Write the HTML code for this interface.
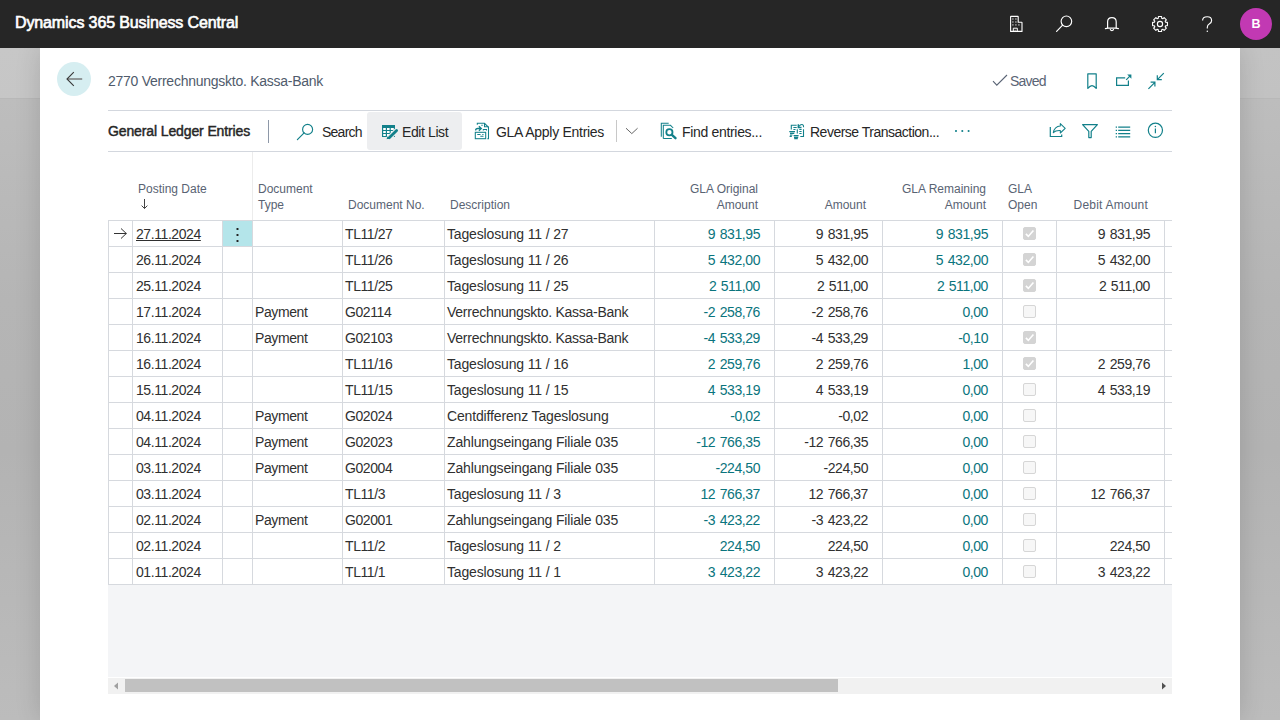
<!DOCTYPE html><html><head><meta charset="utf-8"><style>*{margin:0;padding:0;box-sizing:border-box}
html,body{width:1280px;height:720px;overflow:hidden}
body{position:relative;font-family:"Liberation Sans",sans-serif;background:linear-gradient(180deg,#bdbdbd 99px,#b5b5b5 300px,#b3b3b3 450px,#bcbcbc 720px);color:#212121}
.abs{position:absolute}
#top{position:absolute;left:0;top:0;width:1280px;height:48px;background:#262626}
#brand{position:absolute;left:15px;top:13px;font-size:16px;color:#fff;-webkit-text-stroke:0.65px #fff;letter-spacing:-0.12px;line-height:20px}
#bgtop{position:absolute;left:0;top:48px;width:1280px;height:51px;background:linear-gradient(170deg,#c7c7c7,#c2c2c2);border-bottom:1px solid #b8b8b8}
#panel{position:absolute;left:40px;top:48px;width:1200px;height:672px;background:#fff;box-shadow:0 0 24px rgba(0,0,0,0.14)}
#back{position:absolute;left:57px;top:62px;width:34px;height:34px;border-radius:50%;background:#d6eef1}
#title{position:absolute;left:108px;top:72px;font-size:14px;line-height:18px;color:#505b6c;letter-spacing:-0.26px}
#saved{position:absolute;left:1010px;top:72px;font-size:14px;line-height:18px;color:#5a6475;letter-spacing:-0.8px}
.line{position:absolute;left:108px;width:1064px;height:1px;background:#d3d7de}
#glt{position:absolute;left:108px;top:122px;font-size:14px;line-height:18px;color:#262626;-webkit-text-stroke:0.45px #262626;letter-spacing:-0.12px}
.tb{position:absolute;top:123px;font-size:14px;line-height:18px;color:#262626;letter-spacing:-0.4px}
#editbg{position:absolute;left:367px;top:112px;width:95px;height:38px;background:#edeef0;border-radius:3px}
.vsep{position:absolute;width:1px}
.hdr{position:absolute;font-size:12px;line-height:16px;color:#596373}
.hl{position:absolute;left:108px;width:1064px;height:1px;background:#d6d9de}
.vl{position:absolute;width:1px;background:#d6d9de}
.c{position:absolute;height:26px;line-height:28px;font-size:14px;letter-spacing:-0.42px;word-spacing:1px;color:#303030;white-space:nowrap}
.c.teal{color:#0a747d}
.c.ds{letter-spacing:-0.15px;word-spacing:0}
.c.ty{letter-spacing:-0.4px}
.c.vk{letter-spacing:-0.26px}
.sel{position:absolute;left:223px;width:29px;height:25px;background:#b4e5ea}
.cb{position:absolute;width:13px;height:13px;border:1px solid #d6d6d6;border-radius:2px;background:#f7f7f7}
.cb.on{background:#d4d4d4;border-color:#d4d4d4}
.cb svg{position:absolute;left:-1px;top:-1px}
#empty{position:absolute;left:108px;top:585px;width:1064px;height:92px;background:#f4f5f7}
#sbtrack{position:absolute;left:108px;top:678px;width:1064px;height:16px;background:#f1f1f1}
#sbthumb{position:absolute;left:125px;top:679px;width:713px;height:13px;background:#c1c1c1}
</style></head><body>
<div id="bgtop"></div>
<div id="panel"></div>
<div id="top"></div>
<div id="brand">Dynamics 365 Business Central</div>
<!-- top icons: building -->
<svg class="abs" style="left:1004px;top:12px" width="24" height="24" viewBox="0 0 24 24"><path d="M6.6 19.4V4.8Q6.6 4.4 7 4.4H13.8Q14.2 4.4 14.2 4.8V10.2H17.6Q18 10.2 18 10.6V19.4Z" fill="none" stroke="#fff" stroke-width="1.1" stroke-linejoin="round"/><path d="M9.3 19.4V16.2H13.3V19.4" fill="none" stroke="#fff" stroke-width="1"/><path d="M10.4 18.3H12.2" stroke="#aaa" stroke-width="1"/><g fill="#ddd"><rect x="8.3" y="6.4" width="1.2" height="1.2"/><rect x="11.3" y="6.4" width="1.2" height="1.2"/><rect x="8.3" y="9.4" width="1.2" height="1.2"/><rect x="11.3" y="9.4" width="1.2" height="1.2"/><rect x="8.3" y="12.3" width="1.2" height="1.2"/><rect x="11.3" y="12.3" width="1.2" height="1.2"/><rect x="14.3" y="12.3" width="1.2" height="1.2"/></g></svg>
<!-- search -->
<svg class="abs" style="left:1054px;top:12px" width="24" height="24" viewBox="0 0 24 24"><circle cx="12.4" cy="9.3" r="5.3" fill="none" stroke="#fff" stroke-width="1.15"/><path d="M8.6 13.1L2.6 19.3" stroke="#fff" stroke-width="1.2" stroke-linecap="round"/></svg>
<!-- bell -->
<svg class="abs" style="left:1100px;top:12px" width="24" height="24" viewBox="0 0 24 24"><path d="M7.6 16.2V9.8Q7.6 5.6 11.9 5.6Q16.2 5.6 16.2 9.8V16.2" fill="none" stroke="#fff" stroke-width="1.2"/><path d="M5.4 16.6Q7 16.2 8 16.2H15.8Q16.8 16.2 18.4 16.6" fill="none" stroke="#fff" stroke-width="1.2" stroke-linecap="round"/><path d="M10.2 17Q10.2 18.6 11.9 18.6Q13.6 18.6 13.6 17" fill="none" stroke="#fff" stroke-width="1.1"/></svg>
<!-- gear -->
<svg class="abs" style="left:1148px;top:12px" width="24" height="24" viewBox="0 0 24 24"><g transform="translate(12,12)"><path d="M-1.72 -5.64L-1.58 -7.43L1.58 -7.43L1.72 -5.64L2.77 -5.21L4.14 -6.37L6.37 -4.14L5.21 -2.77L5.64 -1.72L7.43 -1.58L7.43 1.58L5.64 1.72L5.21 2.77L6.37 4.14L4.14 6.37L2.77 5.21L1.72 5.64L1.58 7.43L-1.58 7.43L-1.72 5.64L-2.77 5.21L-4.14 6.37L-6.37 4.14L-5.21 2.77L-5.64 1.72L-7.43 1.58L-7.43 -1.58L-5.64 -1.72L-5.21 -2.77L-6.37 -4.14L-4.14 -6.37L-2.77 -5.21Z" fill="none" stroke="#fff" stroke-width="1.1" stroke-linejoin="round"/><circle r="2.6" fill="none" stroke="#fff" stroke-width="1.15"/></g></svg>
<!-- help -->
<svg class="abs" style="left:1196px;top:12px" width="24" height="24" viewBox="0 0 24 24"><path d="M6.6 8.6Q6.6 4.7 11.3 4.7Q15.6 4.7 15.6 8.4Q15.6 10.4 13.5 11.7Q11.3 13 11.3 15.2V16.6" fill="none" stroke="#fff" stroke-width="1.15"/><circle cx="11.3" cy="19.2" r="0.75" fill="#fff"/></svg>
<div class="abs" style="left:1240px;top:8px;width:32px;height:32px;border-radius:50%;background:#c239b3;color:#fff;font-weight:bold;font-size:12.5px;line-height:32px;text-align:center">B</div>
<!-- panel header -->
<div id="back"></div>
<svg class="abs" style="left:63px;top:67px" width="24" height="24" viewBox="0 0 24 24"><path d="M4.5 12H19.2" stroke="#6a6a6a" stroke-width="1.3"/><path d="M10.8 5.2L4 12L10.8 18.8" fill="none" stroke="#3a3a3a" stroke-width="1.1"/></svg>
<div id="title">2770 Verrechnungskto. Kassa-Bank</div>
<svg class="abs" style="left:990px;top:72px" width="20" height="16" viewBox="0 0 20 16"><path d="M3 9.2L6.8 13.2L17 3" fill="none" stroke="#5a6475" stroke-width="1.1"/></svg>
<div id="saved">Saved</div>
<!-- bookmark -->
<svg class="abs" style="left:1080px;top:68px" width="24" height="24" viewBox="0 0 24 24"><path d="M7.8 20.4V5.8H16.2V20.4Q13.9 17.6 12 17.6Q10.1 17.6 7.8 20.4Z" fill="none" stroke="#12808a" stroke-width="1.2" stroke-linejoin="round"/></svg>
<!-- open new -->
<svg class="abs" style="left:1112px;top:68px" width="24" height="24" viewBox="0 0 24 24"><path d="M13.2 9.8H4.6V17.4H16.4V12.6" fill="none" stroke="#12808a" stroke-width="1.2"/><path d="M14.2 11.8L18.6 7.4" stroke="#12808a" stroke-width="1.2"/><path d="M15.2 6.6H19.4V10.8Z" fill="#12808a"/></svg>
<!-- collapse -->
<svg class="abs" style="left:1144px;top:68px" width="24" height="24" viewBox="0 0 24 24"><path d="M19.8 5.2L13.6 11.4M13.3 7.2V11.7H17.8M4.4 20.8L10.4 14.8M6.6 14.2H10.9V18.5" fill="none" stroke="#12808a" stroke-width="1.2"/></svg>
<!-- toolbar -->
<div class="line" style="top:110px"></div>
<div class="line" style="top:151px"></div>
<div id="glt">General Ledger Entries</div>
<div class="vsep" style="left:268px;top:120px;height:23px;background:#8e98a8"></div>
<svg class="abs" style="left:294px;top:119px" width="24" height="24" viewBox="0 0 24 24"><circle cx="13.6" cy="10.4" r="5" fill="none" stroke="#12808a" stroke-width="1.15"/><path d="M10.1 13.9L3.4 20.6" stroke="#12808a" stroke-width="1.2" stroke-linecap="round"/></svg>
<div class="tb" style="left:322px;letter-spacing:-0.75px">Search</div>
<div id="editbg"></div>
<svg class="abs" style="left:377px;top:119px" width="24" height="24" viewBox="0 0 24 24"><rect x="5" y="6" width="13" height="12" fill="#12808a"/><g fill="#fff"><rect x="6.2" y="9" width="2.6" height="2"/><rect x="10" y="9" width="2.6" height="2"/><rect x="13.8" y="9" width="3" height="2"/><rect x="6.2" y="12" width="2.6" height="2"/><rect x="10" y="12" width="2.6" height="2"/><rect x="13.8" y="12" width="3" height="2"/><rect x="6.2" y="15" width="2.6" height="2"/><rect x="10" y="15" width="2.6" height="2"/><rect x="13.8" y="15" width="3" height="2"/></g><path d="M10.5 20.5L19.8 11.2" stroke="#edeef0" stroke-width="5"/><path d="M12.2 18.8L19.6 11.4" stroke="#12808a" stroke-width="2.8" stroke-linecap="round"/><path d="M9.6 20.2L10.4 17.6L12.4 19.6Z" fill="#12808a"/></svg>
<div class="tb" style="left:402px">Edit List</div>
<svg class="abs" style="left:470px;top:119px" width="24" height="24" viewBox="0 0 24 24" fill="none" stroke="#12808a" stroke-width="1.05"><path d="M7.3 5.8V4.3H14.5L18.5 8.3V19.7H17.3"/><path d="M14.5 4.3V7.8H18.5"/><path d="M11.3 6.3H12.7M7.3 15.5H10.5M12.3 15.5H13.5M10.3 17.3H13.5"/><path d="M5.6 11.6Q5.6 9.5 7.8 9.5H11.3M8.9 7.3L11.3 9.5L8.9 11.7" stroke-width="1.3"/><path d="M13.3 11.6V10.5H16.5V11.6"/><rect x="5.3" y="13.3" width="10.4" height="6.4"/></svg>
<div class="tb" style="left:496px;letter-spacing:-0.28px">GLA Apply Entries</div>
<div class="vsep" style="left:616px;top:120px;height:22px;background:#c8c8c8"></div>
<svg class="abs" style="left:625px;top:127px" width="14" height="8" viewBox="0 0 14 8"><path d="M1 1.2L6.8 6.6L12.6 1.2" fill="none" stroke="#666" stroke-width="1"/></svg>
<svg class="abs" style="left:657px;top:119px" width="24" height="24" viewBox="0 0 24 24" fill="none" stroke="#12808a"><path d="M4.3 17.7V4.3H11.7" stroke-width="1.05"/><path d="M6.3 19.5V6.3H13.5L16.2 9M6.3 19.5H14.8" stroke-width="1.05"/><circle cx="12.4" cy="13.3" r="3.1" stroke-width="1.8"/><path d="M14.9 15.9L18.5 19.2" stroke-width="2.4" stroke-linecap="round"/></svg>
<div class="tb" style="left:682px;letter-spacing:-0.32px">Find entries...</div>
<svg class="abs" style="left:785px;top:119px" width="24" height="24" viewBox="0 0 24 24" fill="none" stroke="#12808a" stroke-width="1.1"><path d="M6.3 10.5V6.3H11.7M8.4 8.5H11.7M8.4 10.5H10.5M12.3 10.3V14.6M14.3 10.5H16.6M14.3 12.5H16.6M14.3 14.5H16.6M18.5 10.3V17.5H15.3"/><path d="M13.3 5.3V8.5H16.5" stroke-width="1.4"/><path d="M14 7.6Q15.2 5.2 17.2 5.5Q18.8 5.8 18.6 8.2" stroke-width="1.1"/><path d="M4.3 12.6H10M5 14.4H9.3M5 16H7.5M4.6 17.4H6.8M8.6 16.7H13.6M9 18.3H13.2M9.2 19.7H12.8" stroke-width="1.2"/></svg>
<div class="tb" style="left:810px;letter-spacing:-0.5px">Reverse Transaction...</div>
<svg class="abs" style="left:954px;top:128px" width="17" height="6" viewBox="0 0 17 6"><circle cx="2" cy="3" r="1.05" fill="#12808a"/><circle cx="8.3" cy="3" r="1.05" fill="#12808a"/><circle cx="14.6" cy="3" r="1.05" fill="#12808a"/></svg>
<!-- share -->
<svg class="abs" style="left:1046px;top:119px" width="24" height="24" viewBox="0 0 24 24" fill="none" stroke="#12808a"><path d="M4.3 8V17.5H15.7V15.5" stroke-width="1.2"/><path d="M7.3 13.7Q8.6 7.2 14.3 7V4.6L19.2 9.4L14.3 14V11.5Q9.6 11.2 7.3 13.7Z" stroke-width="1.05" stroke-linejoin="round"/></svg>
<!-- filter -->
<svg class="abs" style="left:1078px;top:119px" width="24" height="24" viewBox="0 0 24 24"><path d="M4.6 5.6H19.4L13.2 12.4V18.6H10.8V12.4Z" fill="none" stroke="#12808a" stroke-width="1.2" stroke-linejoin="round"/></svg>
<!-- list -->
<svg class="abs" style="left:1111px;top:119px" width="24" height="24" viewBox="0 0 24 24"><path d="M4.7 8.2H6M7.2 8.2H19.2M4.7 11.4H6M7.2 11.4H19.2M4.7 14.6H6M7.2 14.6H19.2M4.7 17.8H6M7.2 17.8H19.2" stroke="#12808a" stroke-width="1.2"/></svg>
<!-- info -->
<svg class="abs" style="left:1143px;top:118px" width="24" height="24" viewBox="0 0 24 24"><circle cx="12.4" cy="12.3" r="7.1" fill="none" stroke="#12808a" stroke-width="1.2"/><path d="M12.4 10.6V15.2" stroke="#12808a" stroke-width="1.2"/><circle cx="12.4" cy="8.6" r="0.75" fill="#12808a"/></svg>
<!-- table header -->
<div class="vl" style="left:252px;top:152px;height:68px;background:#ececec"></div>
<div class="hdr" style="left:138px;top:181px">Posting Date</div>
<svg class="abs" style="left:140px;top:198px" width="9" height="12" viewBox="0 0 9 12"><path d="M4.5 1V10.5M1.6 7.6L4.5 10.5L7.4 7.6" fill="none" stroke="#444" stroke-width="1"/></svg>
<div class="hdr" style="left:258px;top:181px">Document<br>Type</div>
<div class="hdr" style="left:348px;top:197px">Document No.</div>
<div class="hdr" style="left:450px;top:197px">Description</div>
<div class="hdr" style="right:522px;top:181px;text-align:right">GLA Original<br>Amount</div>
<div class="hdr" style="right:414px;top:197px;text-align:right">Amount</div>
<div class="hdr" style="right:294px;top:181px;text-align:right">GLA Remaining<br>Amount</div>
<div class="hdr" style="left:1008px;top:181px">GLA<br>Open</div>
<div class="hdr" style="right:132px;top:197px;text-align:right;letter-spacing:0.2px">Debit Amount</div>
<div id="empty"></div>
<div id="sbtrack"></div>
<div id="sbthumb"></div>
<svg class="abs" style="left:113px;top:682px" width="6" height="8" viewBox="0 0 6 8"><path d="M5 0.5V7.5L1 4Z" fill="#a0a0a0"/></svg>
<svg class="abs" style="left:1161px;top:682px" width="6" height="8" viewBox="0 0 6 8"><path d="M1 0.5V7.5L5 4Z" fill="#505050"/></svg>

<div class="hl" style="top:220px"></div><div class="hl" style="top:246px"></div><div class="hl" style="top:272px"></div><div class="hl" style="top:298px"></div><div class="hl" style="top:324px"></div><div class="hl" style="top:350px"></div><div class="hl" style="top:376px"></div><div class="hl" style="top:402px"></div><div class="hl" style="top:428px"></div><div class="hl" style="top:454px"></div><div class="hl" style="top:480px"></div><div class="hl" style="top:506px"></div><div class="hl" style="top:532px"></div><div class="hl" style="top:558px"></div><div class="hl" style="top:584px"></div><div class="vl" style="left:108px;top:220px;height:365px"></div><div class="vl" style="left:132px;top:220px;height:365px"></div><div class="vl" style="left:222px;top:220px;height:365px"></div><div class="vl" style="left:252px;top:220px;height:365px"></div><div class="vl" style="left:342px;top:220px;height:365px"></div><div class="vl" style="left:444px;top:220px;height:365px"></div><div class="vl" style="left:654px;top:220px;height:365px"></div><div class="vl" style="left:774px;top:220px;height:365px"></div><div class="vl" style="left:882px;top:220px;height:365px"></div><div class="vl" style="left:1002px;top:220px;height:365px"></div><div class="vl" style="left:1056px;top:220px;height:365px"></div><div class="vl" style="left:1164px;top:220px;height:365px"></div><div class="sel" style="top:221px"></div><div class="c dots" style="left:231px;top:220px"><svg width="12" height="26"><rect x="5.5" y="8" width="2" height="2" rx="0.6" fill="#222"/><rect x="5.5" y="14" width="2" height="2" rx="0.6" fill="#222"/><rect x="5.5" y="20" width="2" height="2" rx="0.6" fill="#222"/></svg></div><svg class="rowarrow" style="position:absolute;left:113px;top:227px" width="15" height="13" viewBox="0 0 15 13"><path d="M1 6.5H13.5M8 1.5L13.3 6.5L8 11.5" fill="none" stroke="#333" stroke-width="1"/></svg><div class="c " style="left:136px;top:220px"><u>27.11.2024</u></div><div class="c ty" style="left:255px;top:220px"></div><div class="c " style="left:345px;top:220px">TL11/27</div><div class="c ds" style="left:447px;top:220px">Tageslosung 11 / 27</div><div class="c r teal" style="right:520px;top:220px">9 831,95</div><div class="c r " style="right:412px;top:220px">9 831,95</div><div class="c r teal" style="right:292px;top:220px">9 831,95</div><div class="cb on" style="left:1023px;top:227px"><svg width="13" height="13" viewBox="0 0 13 13"><path d="M2.9 6.9L5.3 9.4L10.4 3.4" fill="none" stroke="#fff" stroke-width="1.6"/></svg></div><div class="c r " style="right:130px;top:220px">9 831,95</div><div class="c " style="left:136px;top:246px">26.11.2024</div><div class="c ty" style="left:255px;top:246px"></div><div class="c " style="left:345px;top:246px">TL11/26</div><div class="c ds" style="left:447px;top:246px">Tageslosung 11 / 26</div><div class="c r teal" style="right:520px;top:246px">5 432,00</div><div class="c r " style="right:412px;top:246px">5 432,00</div><div class="c r teal" style="right:292px;top:246px">5 432,00</div><div class="cb on" style="left:1023px;top:253px"><svg width="13" height="13" viewBox="0 0 13 13"><path d="M2.9 6.9L5.3 9.4L10.4 3.4" fill="none" stroke="#fff" stroke-width="1.6"/></svg></div><div class="c r " style="right:130px;top:246px">5 432,00</div><div class="c " style="left:136px;top:272px">25.11.2024</div><div class="c ty" style="left:255px;top:272px"></div><div class="c " style="left:345px;top:272px">TL11/25</div><div class="c ds" style="left:447px;top:272px">Tageslosung 11 / 25</div><div class="c r teal" style="right:520px;top:272px">2 511,00</div><div class="c r " style="right:412px;top:272px">2 511,00</div><div class="c r teal" style="right:292px;top:272px">2 511,00</div><div class="cb on" style="left:1023px;top:279px"><svg width="13" height="13" viewBox="0 0 13 13"><path d="M2.9 6.9L5.3 9.4L10.4 3.4" fill="none" stroke="#fff" stroke-width="1.6"/></svg></div><div class="c r " style="right:130px;top:272px">2 511,00</div><div class="c " style="left:136px;top:298px">17.11.2024</div><div class="c ty" style="left:255px;top:298px">Payment</div><div class="c " style="left:345px;top:298px">G02114</div><div class="c ds vk" style="left:447px;top:298px">Verrechnungskto. Kassa-Bank</div><div class="c r teal" style="right:520px;top:298px">-2 258,76</div><div class="c r " style="right:412px;top:298px">-2 258,76</div><div class="c r teal" style="right:292px;top:298px">0,00</div><div class="cb" style="left:1023px;top:305px"></div><div class="c r " style="right:130px;top:298px"></div><div class="c " style="left:136px;top:324px">16.11.2024</div><div class="c ty" style="left:255px;top:324px">Payment</div><div class="c " style="left:345px;top:324px">G02103</div><div class="c ds vk" style="left:447px;top:324px">Verrechnungskto. Kassa-Bank</div><div class="c r teal" style="right:520px;top:324px">-4 533,29</div><div class="c r " style="right:412px;top:324px">-4 533,29</div><div class="c r teal" style="right:292px;top:324px">-0,10</div><div class="cb on" style="left:1023px;top:331px"><svg width="13" height="13" viewBox="0 0 13 13"><path d="M2.9 6.9L5.3 9.4L10.4 3.4" fill="none" stroke="#fff" stroke-width="1.6"/></svg></div><div class="c r " style="right:130px;top:324px"></div><div class="c " style="left:136px;top:350px">16.11.2024</div><div class="c ty" style="left:255px;top:350px"></div><div class="c " style="left:345px;top:350px">TL11/16</div><div class="c ds" style="left:447px;top:350px">Tageslosung 11 / 16</div><div class="c r teal" style="right:520px;top:350px">2 259,76</div><div class="c r " style="right:412px;top:350px">2 259,76</div><div class="c r teal" style="right:292px;top:350px">1,00</div><div class="cb on" style="left:1023px;top:357px"><svg width="13" height="13" viewBox="0 0 13 13"><path d="M2.9 6.9L5.3 9.4L10.4 3.4" fill="none" stroke="#fff" stroke-width="1.6"/></svg></div><div class="c r " style="right:130px;top:350px">2 259,76</div><div class="c " style="left:136px;top:376px">15.11.2024</div><div class="c ty" style="left:255px;top:376px"></div><div class="c " style="left:345px;top:376px">TL11/15</div><div class="c ds" style="left:447px;top:376px">Tageslosung 11 / 15</div><div class="c r teal" style="right:520px;top:376px">4 533,19</div><div class="c r " style="right:412px;top:376px">4 533,19</div><div class="c r teal" style="right:292px;top:376px">0,00</div><div class="cb" style="left:1023px;top:383px"></div><div class="c r " style="right:130px;top:376px">4 533,19</div><div class="c " style="left:136px;top:402px">04.11.2024</div><div class="c ty" style="left:255px;top:402px">Payment</div><div class="c " style="left:345px;top:402px">G02024</div><div class="c ds" style="left:447px;top:402px">Centdifferenz Tageslosung</div><div class="c r teal" style="right:520px;top:402px">-0,02</div><div class="c r " style="right:412px;top:402px">-0,02</div><div class="c r teal" style="right:292px;top:402px">0,00</div><div class="cb" style="left:1023px;top:409px"></div><div class="c r " style="right:130px;top:402px"></div><div class="c " style="left:136px;top:428px">04.11.2024</div><div class="c ty" style="left:255px;top:428px">Payment</div><div class="c " style="left:345px;top:428px">G02023</div><div class="c ds" style="left:447px;top:428px">Zahlungseingang Filiale 035</div><div class="c r teal" style="right:520px;top:428px">-12 766,35</div><div class="c r " style="right:412px;top:428px">-12 766,35</div><div class="c r teal" style="right:292px;top:428px">0,00</div><div class="cb" style="left:1023px;top:435px"></div><div class="c r " style="right:130px;top:428px"></div><div class="c " style="left:136px;top:454px">03.11.2024</div><div class="c ty" style="left:255px;top:454px">Payment</div><div class="c " style="left:345px;top:454px">G02004</div><div class="c ds" style="left:447px;top:454px">Zahlungseingang Filiale 035</div><div class="c r teal" style="right:520px;top:454px">-224,50</div><div class="c r " style="right:412px;top:454px">-224,50</div><div class="c r teal" style="right:292px;top:454px">0,00</div><div class="cb" style="left:1023px;top:461px"></div><div class="c r " style="right:130px;top:454px"></div><div class="c " style="left:136px;top:480px">03.11.2024</div><div class="c ty" style="left:255px;top:480px"></div><div class="c " style="left:345px;top:480px">TL11/3</div><div class="c ds" style="left:447px;top:480px">Tageslosung 11 / 3</div><div class="c r teal" style="right:520px;top:480px">12 766,37</div><div class="c r " style="right:412px;top:480px">12 766,37</div><div class="c r teal" style="right:292px;top:480px">0,00</div><div class="cb" style="left:1023px;top:487px"></div><div class="c r " style="right:130px;top:480px">12 766,37</div><div class="c " style="left:136px;top:506px">02.11.2024</div><div class="c ty" style="left:255px;top:506px">Payment</div><div class="c " style="left:345px;top:506px">G02001</div><div class="c ds" style="left:447px;top:506px">Zahlungseingang Filiale 035</div><div class="c r teal" style="right:520px;top:506px">-3 423,22</div><div class="c r " style="right:412px;top:506px">-3 423,22</div><div class="c r teal" style="right:292px;top:506px">0,00</div><div class="cb" style="left:1023px;top:513px"></div><div class="c r " style="right:130px;top:506px"></div><div class="c " style="left:136px;top:532px">02.11.2024</div><div class="c ty" style="left:255px;top:532px"></div><div class="c " style="left:345px;top:532px">TL11/2</div><div class="c ds" style="left:447px;top:532px">Tageslosung 11 / 2</div><div class="c r teal" style="right:520px;top:532px">224,50</div><div class="c r " style="right:412px;top:532px">224,50</div><div class="c r teal" style="right:292px;top:532px">0,00</div><div class="cb" style="left:1023px;top:539px"></div><div class="c r " style="right:130px;top:532px">224,50</div><div class="c " style="left:136px;top:558px">01.11.2024</div><div class="c ty" style="left:255px;top:558px"></div><div class="c " style="left:345px;top:558px">TL11/1</div><div class="c ds" style="left:447px;top:558px">Tageslosung 11 / 1</div><div class="c r teal" style="right:520px;top:558px">3 423,22</div><div class="c r " style="right:412px;top:558px">3 423,22</div><div class="c r teal" style="right:292px;top:558px">0,00</div><div class="cb" style="left:1023px;top:565px"></div><div class="c r " style="right:130px;top:558px">3 423,22</div>
</body></html>
